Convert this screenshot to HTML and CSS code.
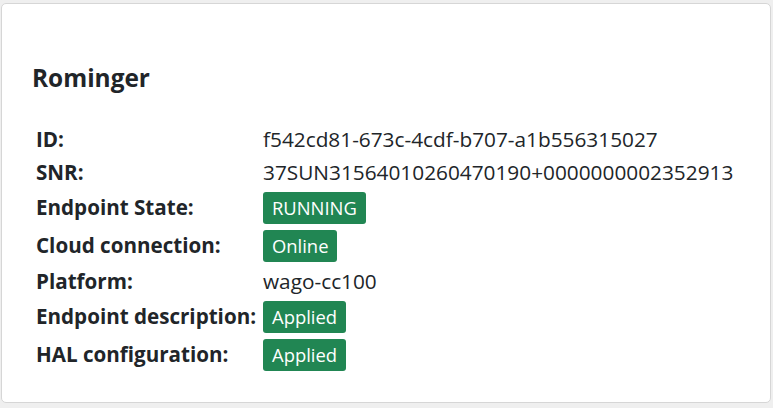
FILE: index.html
```html
<!DOCTYPE html>
<html>
<head>
<meta charset="utf-8">
<link rel="stylesheet" href="styles.css">
</head>
<body>
<div class="card">
  <div class="card-body">
    <h5 class="title">Rominger</h5>
    <div class="props">
      <div class="row text-row"><div class="label">ID:</div><div class="value">f542cd81-673c-4cdf-b707-a1b556315027</div></div>
      <div class="row text-row"><div class="label">SNR:</div><div class="value">37SUN31564010260470190+0000000002352913</div></div>
      <div class="row badge-row"><div class="label">Endpoint State:</div><div class="value"><span class="badge">RUNNING</span></div></div>
      <div class="row badge-row"><div class="label">Cloud connection:</div><div class="value"><span class="badge">Online</span></div></div>
      <div class="row text-row"><div class="label">Platform:</div><div class="value">wago-cc100</div></div>
      <div class="row badge-row"><div class="label">Endpoint description:</div><div class="value"><span class="badge">Applied</span></div></div>
      <div class="row badge-row"><div class="label">HAL configuration:</div><div class="value"><span class="badge">Applied</span></div></div>
    </div>
  </div>
</div>
</body>
</html>
```
FILE: styles.css
```css
html, body {
  margin: 0;
  padding: 0;
}
body {
  background: #efefef;
  font-family: "Open Sans", "Noto Sans", sans-serif;
  color: #212529;
  padding: 3px 2px 2px 1px;
}
.card {
  background: #fff;
  border: 1px solid #d6d6d6;
  border-radius: 5px;
  height: 400px;
  box-sizing: border-box;
}
.card-body {
  padding: 60px 30px 0 30px;
}
.title {
  margin: 0 0 30px 0;
  font-size: 24.4px;
  font-weight: 700;
  line-height: 28.8px;
}
.props {
  padding-left: 4px;
}
.row {
  display: grid;
  grid-template-columns: 227px auto;
  align-items: center;
  padding: 3px 0;
  font-size: 20.8px;
  line-height: 27px;
}
.label {
  font-weight: 700;
  font-size: 20.6px;
  white-space: nowrap;
}
.value {
  white-space: nowrap;
}
.badge-row {
  height: 38px;
  box-sizing: border-box;
}
.badge {
  display: inline-block;
  background: #218653;
  color: #fff;
  border-radius: 3px;
  padding: 4px 9px;
  line-height: 24px;
  font-size: 18.4px;
}
```
